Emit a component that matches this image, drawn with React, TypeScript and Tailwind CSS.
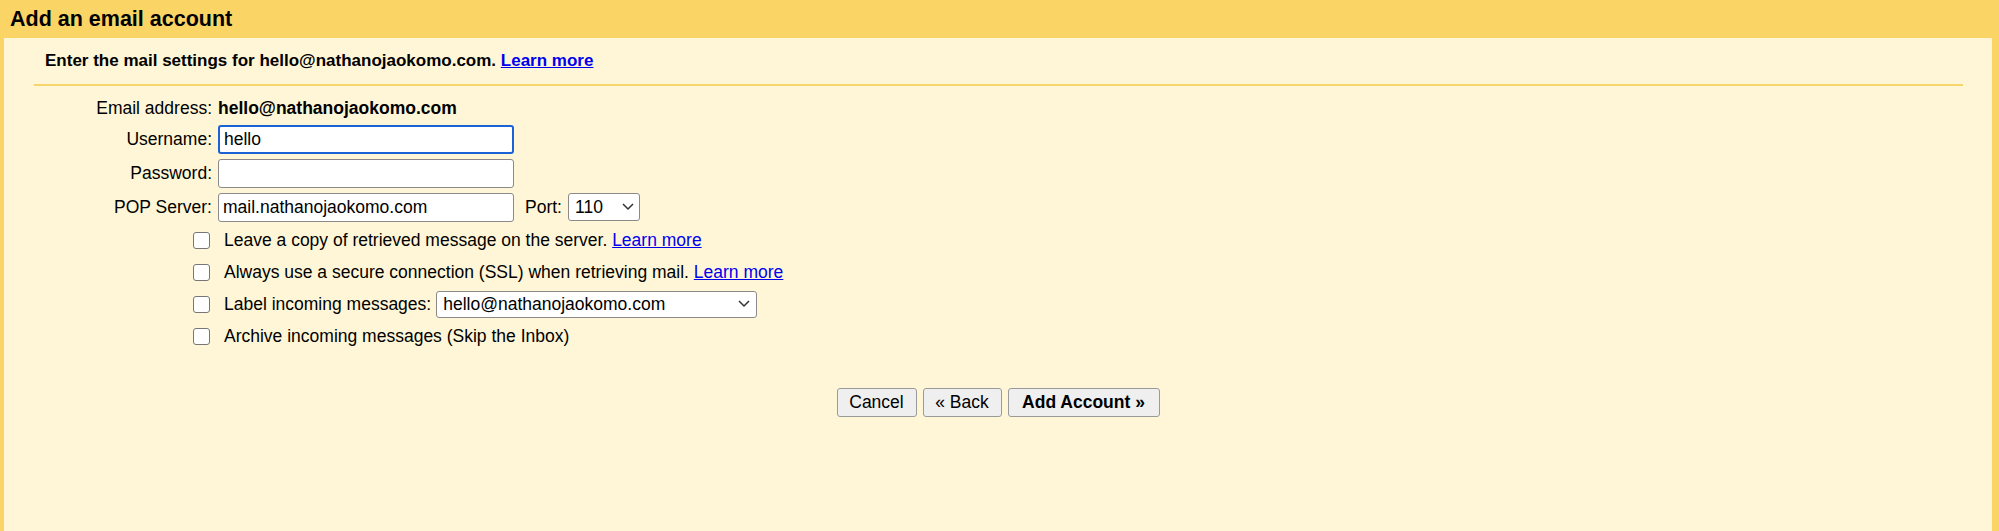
export default function App() {
  const f = { fontFamily: '"Liberation Sans", Arial, sans-serif' };
  const Row = ({ label, children, h = "h-[34px]" }: { label: string; children: React.ReactNode; h?: string }) => (
    <div className={"flex items-center " + h}>
      <div className="w-[214px] text-right pr-[6px] shrink-0">{label}</div>
      {children}
    </div>
  );
  const Check = ({ children }: { children: React.ReactNode }) => (
    <div className="flex items-center h-[32px] pl-[189px]">
      <span className="w-[17px] h-[17px] border border-[#767676] rounded-[3px] bg-white mr-[14px] shrink-0" />
      {children}
    </div>
  );
  const Chev = () => (
    <svg width="12" height="8" viewBox="0 0 12 8" className="ml-auto"><path d="M1 1l5 5 5-5" fill="none" stroke="#333" strokeWidth="1.5" /></svg>
  );
  const input = "w-[296px] h-[29px] bg-white rounded-[3px] px-[4px] flex items-center";
  return (
    <div style={f} className="w-[1999px] h-[531px] bg-[#fbd466] text-black text-[17.5px] flex flex-col">
      <div className="h-[38px] flex items-center pl-[10px] text-[21.5px] font-bold">Add an email account</div>
      <div className="flex-1 bg-[#fff6d7] ml-[4px] mr-[7px] flex flex-col">
        <div className="h-[46px] flex items-center pl-[41px] text-[17px] font-bold">
          Enter the mail settings for hello@nathanojaokomo.com.&nbsp;<span className="text-[#0000ee] underline">Learn more</span>
        </div>
        <div className="ml-[30px] mr-[29px] h-[2px] bg-[#f6d56b]" />
        <div className="pt-[8px]">
          <Row label="Email address:" h="h-[28px]"><span className="font-bold">hello@nathanojaokomo.com</span></Row>
          <Row label="Username:"><div className={input + " border-2 border-[#1a62d6]"}>hello</div></Row>
          <Row label="Password:"><div className={input + " border border-[#8a8a8a]"} /></Row>
          <Row label="POP Server:">
            <div className={input + " border border-[#8a8a8a]"}>mail.nathanojaokomo.com</div>
            <span className="ml-[11px] mr-[6px]">Port:</span>
            <div className="w-[72px] h-[28px] bg-white border border-[#8a8a8a] rounded-[3px] pl-[6px] pr-[5px] flex items-center">110<Chev /></div>
          </Row>
          <Check>Leave a copy of retrieved message on the server.&nbsp;<span className="text-[#0000ee] underline">Learn more</span></Check>
          <Check>Always use a secure connection (SSL) when retrieving mail.&nbsp;<span className="text-[#0000ee] underline">Learn more</span></Check>
          <Check>Label incoming messages:
            <div className="ml-[5px] w-[321px] h-[27px] bg-white border border-[#8a8a8a] rounded-[3px] px-[6px] flex items-center">hello@nathanojaokomo.com<Chev /></div>
          </Check>
          <Check>Archive incoming messages (Skip the Inbox)</Check>
        </div>
        <div className="flex justify-center gap-[6px] mt-[36px] pl-[0px]">
          <button className="w-[80px] h-[29px] bg-[#efefef] border border-[#9a9a9a] rounded-[3px]">Cancel</button>
          <button className="w-[79px] h-[29px] bg-[#efefef] border border-[#9a9a9a] rounded-[3px]">« Back</button>
          <button className="w-[152px] h-[29px] bg-[#efefef] border border-[#9a9a9a] rounded-[3px] font-bold">Add Account »</button>
        </div>
      </div>
    </div>
  );
}
